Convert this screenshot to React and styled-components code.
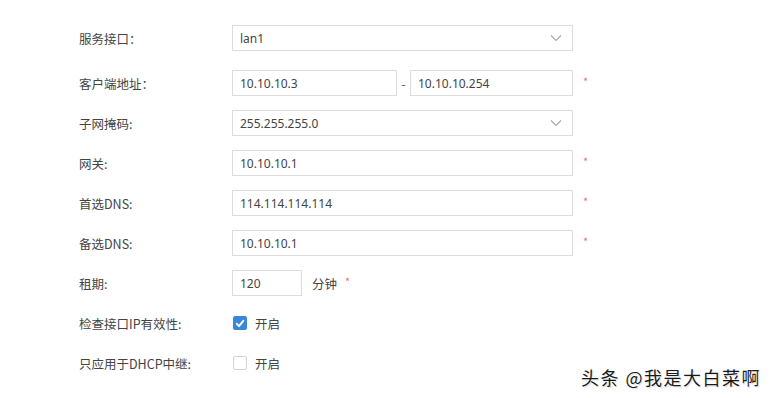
import React from 'react'
import styled, { createGlobalStyle } from 'styled-components'

const GlobalStyle = createGlobalStyle`
  html, body {
    margin: 0;
    padding: 0;
    background: #ffffff;
    overflow: hidden;
  }
  body {
    font-family: "Noto Sans CJK SC", "Noto Sans", sans-serif;
  }
`

const Chevron = () => (
  <svg width="12" height="8" viewBox="0 0 12 8">
    <path d="M1 1.5 L6 6.5 L11 1.5" fill="none" stroke="#a8a8a8" strokeWidth="1.1" />
  </svg>
)

const Check = () => (
  <svg width="13" height="13" viewBox="0 0 13 13">
    <path d="M3 6.8 L5.5 9.4 L10.2 3.4" fill="none" stroke="#fff" strokeWidth="2" strokeLinecap="round" strokeLinejoin="round" />
  </svg>
)

const App = () => {
  return (
    <Page>
      <GlobalStyle />
      <Form>
        <Row first>
          <Label>服务接口：</Label>
          <Select>
            <span>lan1</span>
            <Chevron />
          </Select>
        </Row>
        <Row>
          <Label>客户端地址：</Label>
          <Input w={165}>10.10.10.3</Input>
          <Dash>-</Dash>
          <Input w={163}>10.10.10.254</Input>
          <Star>*</Star>
        </Row>
        <Row>
          <Label>子网掩码:</Label>
          <Select>
            <span>255.255.255.0</span>
            <Chevron />
          </Select>
        </Row>
        <Row>
          <Label>网关:</Label>
          <Input w={341}>10.10.10.1</Input>
          <Star>*</Star>
        </Row>
        <Row>
          <Label>首选DNS:</Label>
          <Input w={341}>114.114.114.114</Input>
          <Star>*</Star>
        </Row>
        <Row>
          <Label>备选DNS:</Label>
          <Input w={341}>10.10.10.1</Input>
          <Star>*</Star>
        </Row>
        <Row>
          <Label>租期:</Label>
          <Input w={70}>120</Input>
          <Unit>分钟</Unit>
          <Star gap={8}>*</Star>
        </Row>
        <Row>
          <Label>检查接口IP有效性:</Label>
          <Box checked>
            <Check />
          </Box>
          <BoxText>开启</BoxText>
        </Row>
        <Row>
          <Label>只应用于DHCP中继:</Label>
          <Box />
          <BoxText>开启</BoxText>
        </Row>
        <Row>
          <Label wide>自定义DHCP选项：<Caret>∨</Caret></Label>
        </Row>
      </Form>
      <Watermark>头条 @我是大白菜啊</Watermark>
    </Page>
  )
}

export default App

const Page = styled.div`
  position: relative;
  width: 774px;
  height: 398px;
  overflow: hidden;
  background: #fff;
`

const Form = styled.div`
  display: flex;
  flex-direction: column;
  padding: 18px 0 0 79px;
`

const Row = styled.div`
  display: flex;
  align-items: center;
  height: 40px;
  flex-shrink: 0;
  margin-bottom: ${p => (p.first ? '5px' : '0')};
`

const Label = styled.div`
  width: 153px;
  flex-shrink: 0;
  font-size: 12.5px;
  color: #444;
  white-space: nowrap;
  margin-left: ${p => (p.wide ? '-5px' : '0')};
  margin-top: ${p => (p.wide ? '32px' : '0')};
`

const Caret = styled.span`
  margin-left: 8px;
  color: #999;
  font-size: 11px;
`

const Input = styled.div`
  box-sizing: border-box;
  width: ${p => p.w}px;
  height: 26px;
  border: 1px solid #dcdcdc;
  padding: 0 7px;
  display: flex;
  align-items: center;
  font-family: "Noto Sans", "Noto Sans CJK SC", sans-serif;
  font-size: 12px;
  color: #444;
`

const Select = styled(Input).attrs({ w: 341 })`
  justify-content: space-between;
  padding-right: 10px;
`

const Dash = styled.span`
  width: 13px;
  text-align: center;
  color: #666;
  font-size: 13px;
`

const Star = styled.span`
  margin-left: ${p => p.gap ?? 10}px;
  color: #e57373;
  font-size: 11px;
  position: relative;
  top: -2px;
`

const Unit = styled.span`
  margin-left: 10px;
  font-size: 12.5px;
  color: #444;
`

const Box = styled.div`
  box-sizing: border-box;
  width: 14px;
  height: 14px;
  margin-left: 1px;
  border-radius: 2px;
  border: 1px solid ${p => (p.checked ? '#3a87d8' : '#d4d4d4')};
  background: ${p => (p.checked ? '#3a87d8' : '#fff')};
  display: flex;
  align-items: center;
  justify-content: center;
`

const BoxText = styled.span`
  margin-left: 8px;
  font-size: 12.5px;
  color: #444;
`

const Watermark = styled.div`
  position: absolute;
  left: 581px;
  top: 364px;
  font-size: 18px;
  color: #1a1a1a;
  letter-spacing: 1.5px;
  text-shadow: 0 0 2px #fff, 0 0 2px #fff, 1px 1px 1px rgba(0,0,0,0.2);
`
